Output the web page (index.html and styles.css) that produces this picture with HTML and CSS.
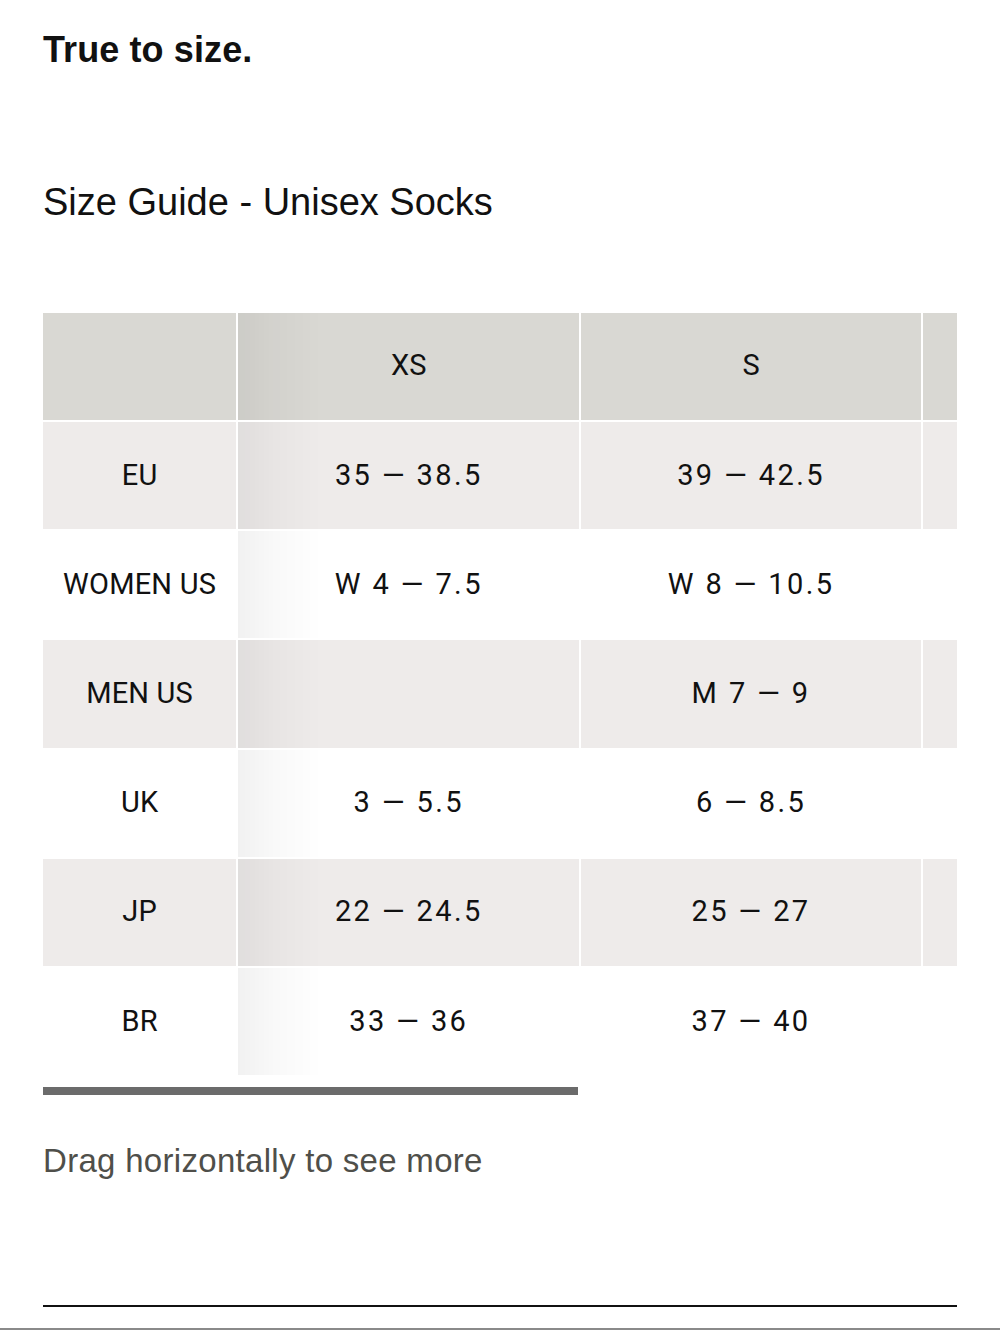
FILE: index.html
```html
<!DOCTYPE html>
<html lang="en">
<head>
<meta charset="utf-8">
<title>Size Guide - Unisex Socks</title>
<link rel="stylesheet" href="styles.css">
</head>
<body>
<main class="page">
  <h2 class="fit">True to size.</h2>
  <h3 class="guide-title">Size Guide - Unisex Socks</h3>

  <div class="table-scroll">
    <table class="size-table">
      <colgroup>
        <col class="c-label"><col class="c-a"><col class="c-b"><col class="c-b">
      </colgroup>
      <thead>
        <tr class="row-head">
          <th class="label"></th><th>XS</th><th>S</th><th></th>
        </tr>
      </thead>
      <tbody>
        <tr class="row-shade">
          <th class="label">EU</th><td>35 — 38.5</td><td>39 — 42.5</td><td></td>
        </tr>
        <tr class="row-plain">
          <th class="label">WOMEN US</th><td>W 4 — 7.5</td><td>W 8 — 10.5</td><td></td>
        </tr>
        <tr class="row-shade">
          <th class="label">MEN US</th><td></td><td>M 7 — 9</td><td></td>
        </tr>
        <tr class="row-plain">
          <th class="label">UK</th><td>3 — 5.5</td><td>6 — 8.5</td><td></td>
        </tr>
        <tr class="row-shade">
          <th class="label">JP</th><td>22 — 24.5</td><td>25 — 27</td><td></td>
        </tr>
        <tr class="row-plain">
          <th class="label">BR</th><td>33 — 36</td><td>37 — 40</td><td></td>
        </tr>
      </tbody>
    </table>
  </div>

  <div class="scroll-track"><div class="scroll-thumb"></div></div>

  <p class="drag-hint">Drag horizontally to see more</p>

  <hr class="rule">
</main>
<div class="page-edge"></div>
</body>
</html>
```

FILE: styles.css
```css
html, body {
  margin: 0;
  padding: 0;
  background: #ffffff;
}

body {
  font-family: "Liberation Sans", Arial, sans-serif;
  color: #111111;
  width: 1000px;
  height: 1330px;
  display: flex;
  flex-direction: column;
}

.page {
  flex: 1;
  padding: 28px 43px 0;
  display: flex;
  flex-direction: column;
}

.fit {
  margin: 0;
  font-size: 36px;
  line-height: 1.2;
  font-weight: 700;
  letter-spacing: 0.1px;
}

.guide-title {
  margin: 109px 0 0;
  font-size: 38px;
  line-height: 1.2;
  font-weight: 400;
}

.table-scroll {
  margin-top: 87px;
  width: 914px;
  overflow: hidden;
}

.size-table {
  margin: -2px;
  border-collapse: separate;
  border-spacing: 2px;
  table-layout: fixed;
  width: 1223px;
  font-family: Roboto, "Liberation Sans", sans-serif;
  font-size: 29px;
  color: #111111;
}

.c-label { width: 193px; }
.c-a { width: 341px; }
.c-b { width: 339px; }

.size-table tr { height: 107.2px; }

.size-table th,
.size-table td {
  padding: 0 0 2px;
  text-align: center;
  vertical-align: middle;
  font-weight: 400;
  position: relative;
}

.size-table td {
  letter-spacing: 2.4px;
}

.row-head th { background: #d9d8d3; }
.row-shade th, .row-shade td { background: #eeebea; }
.row-plain th, .row-plain td { background: #ffffff; }

.size-table .label {
  position: sticky;
  left: 0;
  z-index: 2;
  letter-spacing: 0.2px;
}

.size-table .label::after {
  content: "";
  position: absolute;
  top: 0;
  bottom: 0;
  left: calc(100% + 2px);
  width: 84px;
  background: linear-gradient(to right, rgba(0, 0, 0, 0.055), rgba(0, 0, 0, 0.022) 45%, rgba(0, 0, 0, 0));
  pointer-events: none;
}

.scroll-track {
  margin-top: 12px;
  width: 914px;
  height: 8px;
}

.scroll-thumb {
  width: 535px;
  height: 8px;
  background: #6b6b6b;
}

.drag-hint {
  margin: 46px 0 0;
  font-size: 33px;
  line-height: 1.2;
  letter-spacing: 0.3px;
  color: #4f4f4a;
}

.rule {
  margin: 124px 0 0;
  border: 0;
  height: 2px;
  background: #111111;
  width: 914px;
}

.page-edge {
  height: 2px;
  background: #8a8a8a;
}
```
